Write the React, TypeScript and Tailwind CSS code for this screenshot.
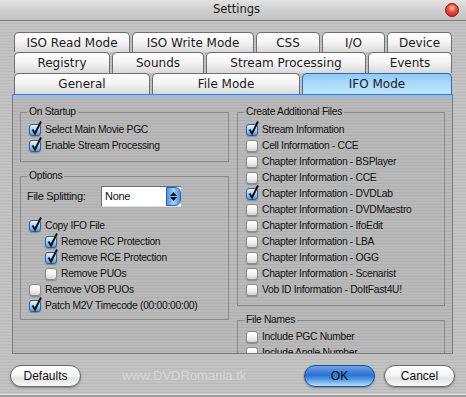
import type { ReactNode } from 'react'
import clsx from 'clsx'

const metal =
  'bg-[repeating-linear-gradient(180deg,#c3c3c3_0px,#c3c3c3_2px,#bababa_2px,#bababa_3px)]'
const panelMetal =
  'bg-[repeating-linear-gradient(180deg,#b9b9b9_0px,#b9b9b9_2px,#b0b0b0_2px,#b0b0b0_3px)]'

function Tab({ label, className, active }: { label: string; className: string; active?: boolean }) {
  return (
    <div
      className={clsx(
        'flex shrink-0 items-center justify-center rounded-t-[5px] border-x border-t text-[12px] text-[#1a1a1a]',
        active
          ? 'border-[#3566b8] bg-[linear-gradient(180deg,#8ec9f5_0%,#a8d9fb_45%,#c2e8ff_100%)]'
          : 'border-[#6e6e6e] bg-[linear-gradient(180deg,#ffffff_0%,#f3f3f3_50%,#d9d9d9_100%)]',
        className,
      )}
    >
      {label}
    </div>
  )
}

function CheckBox({ checked }: { checked?: boolean }) {
  return (
    <span
      className={clsx(
        'relative h-[12px] w-[12px] shrink-0 rounded-[3px] border shadow-[0_1px_1px_rgba(0,0,0,0.25)]',
        checked
          ? 'border-[#2f5f9f] bg-[linear-gradient(180deg,#e8f5ff_0%,#a4d3f8_50%,#4e9de6_100%)]'
          : 'border-[#8a8a8a] bg-[linear-gradient(180deg,#ffffff_0%,#f2f2f2_50%,#d4d4d4_100%)]',
      )}
    >
      {checked && (
        <svg className="absolute -top-[5px] left-[0px]" width="13" height="16" viewBox="0 0 13 16">
          <path d="M2.5 9.5 L5 13.5 L11 1.5" fill="none" stroke="#101010" strokeWidth="2" />
        </svg>
      )}
    </span>
  )
}

function Check({ label, checked, indent }: { label: string; checked?: boolean; indent?: boolean }) {
  return (
    <div className={clsx('flex h-[16px] items-center gap-[4px] whitespace-nowrap', indent && 'pl-[16px]')}>
      <CheckBox checked={checked} />
      <span>{label}</span>
    </div>
  )
}

function Group({ title, className, children }: { title: string; className?: string; children: ReactNode }) {
  return (
    <fieldset className={clsx('border border-[#8a8a8a] px-[8px]', className)}>
      <legend className="-ml-[2px] px-[2px] leading-[14px]">{title}</legend>
      {children}
    </fieldset>
  )
}

function Pill({ label, primary }: { label: string; primary?: boolean }) {
  return (
    <button
      className={clsx(
        'flex h-[22px] w-[71px] items-center justify-center rounded-full border text-[12px] tracking-normal text-[#111] shadow-[0_1px_2px_rgba(0,0,0,0.35)]',
        primary
          ? 'border-[#1f4f9c] bg-[linear-gradient(180deg,#6aa6ea_0%,#2f6fd0_45%,#4b95e6_65%,#b6e2ff_100%)]'
          : 'border-[#6a6a6a] bg-[linear-gradient(180deg,#ffffff_0%,#f6f6f6_45%,#e2e2e2_65%,#fafafa_100%)]',
      )}
    >
      {label}
    </button>
  )
}

export default function App() {
  return (
    <div
      className={clsx(
        'flex h-[397px] w-[466px] flex-col overflow-hidden font-["Liberation_Sans",Arial,sans-serif] text-[10.3px] tracking-[-0.3px] text-[#111]',
        metal,
      )}
    >
      {/* title bar */}
      <div className="flex h-[21px] shrink-0 items-center border-b border-[#7c7c7c] bg-[linear-gradient(180deg,#e2e2e2_0%,#d0d0d0_50%,#c2c2c2_100%)] pr-[7px]">
        <div className="flex-1" />
        <span className="pl-[14px] font-['DejaVu_Sans',sans-serif] text-[11.5px] tracking-normal text-[#1a1a1a]">
          Settings
        </span>
        <div className="flex flex-1 justify-end">
          <span className="h-[14px] w-[14px] rounded-full border border-[#7a1a10] bg-[radial-gradient(circle_at_50%_35%,#ffc2b4_0%,#f0503c_40%,#b81a10_100%)]" />
        </div>
      </div>

      {/* tabs */}
      <div className="flex shrink-0 flex-col pl-[14px] pt-[11px] font-['DejaVu_Sans',sans-serif] tracking-normal">
        <div className="flex h-[20px] gap-[2px]">
          <Tab label="ISO Read Mode" className="w-[116px]" />
          <Tab label="ISO Write Mode" className="w-[122px]" />
          <Tab label="CSS" className="w-[64px]" />
          <Tab label="I/O" className="w-[63px]" />
          <Tab label="Device" className="w-[65px]" />
        </div>
        <div className="flex h-[21px] gap-[2px]">
          <Tab label="Registry" className="w-[96px]" />
          <Tab label="Sounds" className="w-[92px]" />
          <Tab label="Stream Processing" className="w-[160px]" />
          <Tab label="Events" className="w-[84px]" />
        </div>
        <div className="flex h-[21px] gap-[2px]">
          <Tab label="General" className="w-[136px]" />
          <Tab label="File Mode" className="w-[148px]" />
          <Tab label="IFO Mode" className="w-[150px]" active />
        </div>
      </div>

      {/* pane */}
      <div className="ml-[12px] w-[441px] shrink-0">
        <div className="h-[3px] border-x border-t border-[#3d7fd6] bg-[#86bff0]" />
        <div
          className={clsx(
            'grid h-[257px] grid-cols-[209px_208px] gap-x-[8px] overflow-hidden border-x border-b border-[#7a7a7a] px-[7px] pt-[8px]',
            panelMetal,
          )}
        >
          <div className="flex flex-col">
            <Group title="On Startup" className="pb-[7px] pt-[3px]">
              <Check label="Select Main Movie PGC" checked />
              <Check label="Enable Stream Processing" checked />
            </Group>
            <Group title="Options" className="mt-[7px] pb-[5px] pt-[3px]">
              <div className="-ml-[2px] flex h-[21px] items-center">
                <span className="w-[74px] text-[11px] tracking-[-0.3px]">File Splitting:</span>
                <div className="flex h-[21px] w-[80px] border-b border-l border-t border-b-[#e4e4e4] border-l-[#6c6c6c] border-t-[#6c6c6c] bg-white">
                  <span className="flex-1 pl-[3px] text-[11px] leading-[19px]">None</span>
                  <span className="flex w-[15px] flex-col items-center justify-center gap-[1px] rounded-r-[6px] border border-[#2d5fae] bg-[linear-gradient(90deg,#4d95e6_0%,#9fd3fb_50%,#4d95e6_100%)]">
                    <svg width="7" height="4" viewBox="0 0 7 4">
                      <path d="M0 4 L3.5 0 L7 4 Z" fill="#111" />
                    </svg>
                    <svg width="7" height="4" viewBox="0 0 7 4">
                      <path d="M0 0 L3.5 4 L7 0 Z" fill="#111" />
                    </svg>
                  </span>
                </div>
              </div>
              <div className="mt-[11px] flex flex-col">
                <Check label="Copy IFO File" checked />
                <Check label="Remove RC Protection" checked indent />
                <Check label="Remove RCE Protection" checked indent />
                <Check label="Remove PUOs" indent />
                <Check label="Remove VOB PUOs" />
                <Check label="Patch M2V Timecode (00:00:00:00)" checked />
              </div>
            </Group>
          </div>

          <div className="flex flex-col">
            <Group title="Create Additional Files" className="pb-[7px] pt-[3px]">
              <Check label="Stream Information" checked />
              <Check label="Cell Information - CCE" />
              <Check label="Chapter Information - BSPlayer" />
              <Check label="Chapter Information - CCE" />
              <Check label="Chapter Information - DVDLab" checked />
              <Check label="Chapter Information - DVDMaestro" />
              <Check label="Chapter Information - IfoEdit" />
              <Check label="Chapter Information - LBA" />
              <Check label="Chapter Information - OGG" />
              <Check label="Chapter Information - Scenarist" />
              <Check label="Vob ID Information - DoItFast4U!" />
            </Group>
            <Group title="File Names" className="mt-[7px] pt-[2px]">
              <Check label="Include PGC Number" />
              <Check label="Include Angle Number" />
            </Group>
          </div>
        </div>
      </div>

      {/* buttons */}
      <div className="flex shrink-0 items-center pl-[10px] pr-[11px] pt-[11px]">
        <Pill label="Defaults" />
        <span className="ml-[41px] text-[13px] tracking-normal text-[#d6d6d6]">www.DVDRomania.tk</span>
        <div className="ml-auto flex gap-[9px]">
          <Pill label="OK" primary />
          <Pill label="Cancel" />
        </div>
      </div>
      <div className="mt-auto h-[3px] border-t border-[#e6e6e6] bg-[#9c9c9c]" />
    </div>
  )
}
